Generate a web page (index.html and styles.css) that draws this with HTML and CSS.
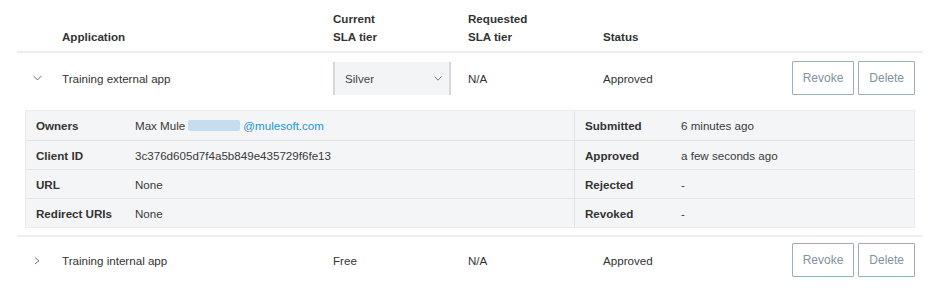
FILE: index.html
```html
<!DOCTYPE html>
<html lang="en">
<head>
  <meta charset="UTF-8" />
  <meta name="viewport" content="width=device-width, initial-scale=1.0"/>
  <title>Applications</title>
  <link rel="stylesheet" href="styles.css">
</head>
<body>
  <div class="apps">
    <div class="row head">
      <div></div>
      <div>Application</div>
      <div>Current<br>SLA tier</div>
      <div>Requested<br>SLA tier</div>
      <div>Status</div>
      <div></div>
    </div>

    <div class="app open">
      <div class="row">
        <div class="toggle">
          <svg width="9" height="6" viewBox="0 0 9 6"><polyline points="0.5,0.8 4.5,5 8.5,0.8" /></svg>
        </div>
        <div>Training external app</div>
        <div>
          <div class="tier-select">
            <span>Silver</span>
            <svg width="8" height="5" viewBox="0 0 8 5"><polyline points="0.5,0.5 4,4.2 7.5,0.5" /></svg>
          </div>
        </div>
        <div>N/A</div>
        <div>Approved</div>
        <div class="actions">
          <button>Revoke</button>
          <button>Delete</button>
        </div>
      </div>

      <div class="details">
        <div class="label">Owners</div>
        <div>Max Mule <span class="mail"><span class="blur"></span>@mulesoft.com</span></div>
        <div class="label side">Submitted</div>
        <div>6 minutes ago</div>

        <div class="label">Client ID</div>
        <div>3c376d605d7f4a5b849e435729f6fe13</div>
        <div class="label side">Approved</div>
        <div>a few seconds ago</div>

        <div class="label">URL</div>
        <div>None</div>
        <div class="label side">Rejected</div>
        <div>-</div>

        <div class="label">Redirect URIs</div>
        <div>None</div>
        <div class="label side">Revoked</div>
        <div>-</div>
      </div>
    </div>

    <div class="app">
      <div class="row">
        <div class="toggle">
          <svg width="6" height="9" viewBox="0 0 6 9"><polyline points="0.8,1.5 5,4.8 0.8,8" /></svg>
        </div>
        <div>Training internal app</div>
        <div>Free</div>
        <div>N/A</div>
        <div>Approved</div>
        <div class="actions">
          <button>Revoke</button>
          <button>Delete</button>
        </div>
      </div>
    </div>
  </div>
</body>
</html>
```

FILE: styles.css
```css
* { box-sizing: border-box; }

body {
  margin: 0;
  font-family: "Liberation Sans", Arial, sans-serif;
  font-size: 11.6px;
  color: #333;
  background: #fff;
}

.apps {
  width: 906px;
  margin-left: 17px;
}

.row {
  display: grid;
  grid-template-columns: 45px 271px 135px 135px 1fr auto;
  align-items: center;
  padding: 8px 8px 9px 0;
}

.row.head {
  align-items: end;
  padding: 10px 8px 5px 0;
  line-height: 18px;
  font-weight: bold;
  border-bottom: 2px solid #ececec;
}

.app + .app { border-top: 2px solid #f0f0f0; }
.app + .app .row { padding-top: 6px; }

.toggle {
  display: flex;
  justify-content: center;
  padding-right: 5px;
}

.toggle svg, .tier-select svg {
  fill: none;
  stroke: #777;
  stroke-width: 1;
}

.tier-select {
  width: 118px;
  height: 33px;
  display: flex;
  align-items: center;
  justify-content: space-between;
  padding: 0 7px 0 10px;
  background: #f3f4f6;
  border-left: 2px solid #d6d7d9;
  border-right: 2px solid #d6d7d9;
  color: #444;
}

.actions {
  display: flex;
  gap: 4px;
}

button {
  height: 34px;
  padding: 0 10px;
  background: #fff;
  border: 1px solid #9aaeb9;
  border-radius: 1px;
  font-family: inherit;
  font-size: 12px;
  color: #80939e;
  cursor: pointer;
}

.details {
  display: grid;
  grid-template-columns: 109px 439px 107px 1fr;
  margin: 6px 8px 7px;
  background: #f4f5f7;
  border: 1px solid #ebecee;
}

.details > div {
  height: 29px;
  display: flex;
  align-items: center;
  border-top: 1px solid #e3e4e6;
  color: #3a3a3a;
}

.details > div:nth-child(-n+4) { border-top: none; }

.details .label {
  padding-left: 10px;
  font-weight: bold;
  color: #333;
}

.details .side {
  border-left: 1px solid #e3e4e6;
}

.mail {
  display: inline-flex;
  align-items: center;
  margin-left: 3px;
  color: #2a93d5;
}

.blur {
  display: inline-block;
  width: 52px;
  height: 11px;
  margin-right: 3px;
  background: #c6dcef;
  border-radius: 2px;
}
```
